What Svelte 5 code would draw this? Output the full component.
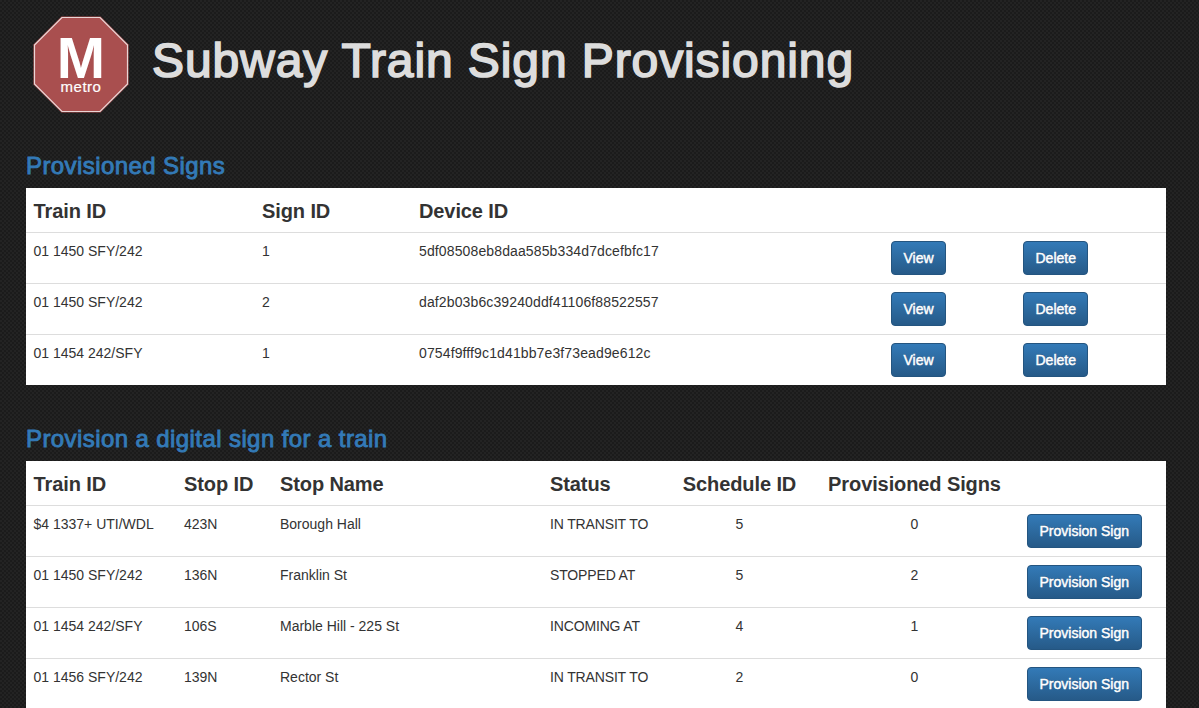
<script>
  const signs = [
    { train: '01 1450 SFY/242', sign: '1', device: '5df08508eb8daa585b334d7dcefbfc17' },
    { train: '01 1450 SFY/242', sign: '2', device: 'daf2b03b6c39240ddf41106f88522557' },
    { train: '01 1454 242/SFY', sign: '1', device: '0754f9fff9c1d41bb7e3f73ead9e612c' }
  ];
  const trains = [
    { train: '$4 1337+ UTI/WDL', stop: '423N', name: 'Borough Hall', status: 'IN TRANSIT TO', schedule: 5, count: 0 },
    { train: '01 1450 SFY/242', stop: '136N', name: 'Franklin St', status: 'STOPPED AT', schedule: 5, count: 2 },
    { train: '01 1454 242/SFY', stop: '106S', name: 'Marble Hill - 225 St', status: 'INCOMING AT', schedule: 4, count: 1 },
    { train: '01 1456 SFY/242', stop: '139N', name: 'Rector St', status: 'IN TRANSIT TO', schedule: 2, count: 0 }
  ];
</script>

<div class="page">
  <header class="top">
    <svg class="logo" viewBox="0 0 96 97" width="96" height="97" aria-label="metro logo">
      <polygon points="28.5,0.5 67.5,0.5 95.5,28.5 95.5,68.5 67.5,96.5 28.5,96.5 0.5,68.5 0.5,28.5" fill="#a94f4f" />
      <polygon points="29,1.5 67,1.5 94.5,29 94.5,68 67,95.5 29,95.5 1.5,68 1.5,29" fill="none" stroke="#e9d5d5" stroke-width="1.2" />
      <text x="48" y="62" text-anchor="middle" class="logo-m">M</text>
      <text x="48" y="76" text-anchor="middle" class="logo-metro">metro</text>
    </svg>
    <h1>Subway Train Sign Provisioning</h1>
  </header>

  <section class="first">
    <h3>Provisioned Signs</h3>
    <table>
      <colgroup>
        <col class="a1" /><col class="a2" /><col class="a3" /><col class="a4" /><col class="a5" />
      </colgroup>
      <thead>
        <tr><th>Train ID</th><th>Sign ID</th><th>Device ID</th><th></th><th></th></tr>
      </thead>
      <tbody>
        {#each signs as s}
          <tr>
            <td>{s.train}</td>
            <td>{s.sign}</td>
            <td class="hex">{s.device}</td>
            <td><button>View</button></td>
            <td><button>Delete</button></td>
          </tr>
        {/each}
      </tbody>
    </table>
  </section>

  <section class="second">
    <h3>Provision a digital sign for a train</h3>
    <table>
      <colgroup>
        <col class="b1" /><col class="b2" /><col class="b3" /><col class="b4" /><col class="b5" /><col class="b6" /><col class="b7" />
      </colgroup>
      <thead>
        <tr>
          <th>Train ID</th><th>Stop ID</th><th>Stop Name</th><th>Status</th>
          <th class="center">Schedule ID</th><th class="center">Provisioned Signs</th><th></th>
        </tr>
      </thead>
      <tbody>
        {#each trains as t}
          <tr>
            <td>{t.train}</td>
            <td>{t.stop}</td>
            <td>{t.name}</td>
            <td class="status">{t.status}</td>
            <td class="center">{t.schedule}</td>
            <td class="center">{t.count}</td>
            <td><button>Provision Sign</button></td>
          </tr>
        {/each}
      </tbody>
    </table>
  </section>
</div>

<style>
  :global(body) {
    margin: 0;
    background-color: #1b1b1b;
    background-image:
      radial-gradient(circle at 1px 1px, rgba(255, 255, 255, 0.035) 0 1px, transparent 1.2px),
      radial-gradient(circle at 3px 3px, rgba(255, 255, 255, 0.035) 0 1px, transparent 1.2px);
    background-size: 4px 4px;
    font-family: "Liberation Sans", Arial, sans-serif;
    color: #333;
    overflow: hidden;
  }
  .page {
    height: 708px;
    overflow: hidden;
    padding: 0 33px 0 26px;
  }
  .top {
    display: flex;
    align-items: center;
    gap: 24px;
    padding: 16px 0 0 7px;
    height: 96px;
  }
  .logo { flex: none; display: block; }
  .logo-m { font: 700 58px "Liberation Sans", Arial, sans-serif; fill: #fff; }
  .logo-metro { font: 400 15px "Liberation Sans", Arial, sans-serif; letter-spacing: 0.5px; fill: #fff; stroke: #fff; stroke-width: 0.2px; }
  h1 {
    margin: 0 0 8px -1px;
    font-size: 48px;
    line-height: 53px;
    font-weight: 400;
    letter-spacing: 0.9px;
    -webkit-text-stroke: 1.7px #ddd;
    color: #ddd;
    white-space: nowrap;
  }
  h3 {
    margin: 0 0 9px;
    font-size: 24px;
    line-height: 26px;
    font-weight: 400;
    letter-spacing: 0.41px;
    -webkit-text-stroke: 0.9px #337ab7;
    color: #337ab7;
  }
  .first { margin-top: 41px; }
  .second { margin-top: 41px; }
  table {
    width: 1140px;
    table-layout: fixed;
    border-collapse: collapse;
    background: #fff;
    font-size: 14px;
    line-height: 20px;
  }
  .a1 { width: 228px; } .a2 { width: 157px; } .a3 { width: 472px; } .a4 { width: 132px; } .a5 { width: 151px; }
  .b1 { width: 150px; } .b2 { width: 96px; } .b3 { width: 270px; } .b4 { width: 127px; }
  .b5 { width: 141px; } .b6 { width: 209px; } .b7 { width: 147px; }
  th {
    text-align: left;
    padding: 11px 8px 8px;
    font-size: 20px;
    line-height: 25px;
    font-weight: 700;
    letter-spacing: -0.1px;
    color: #333;
    white-space: nowrap;
    border-bottom: 1px solid #ddd;
  }
  td {
    padding: 8px;
    vertical-align: top;
    border-top: 1px solid #ddd;
    white-space: nowrap;
  }
  th:first-child, td:first-child { padding-left: 7.5px; }
  thead + tbody tr:first-child td { border-top: 0; }
  .center { text-align: center; }
  .hex { letter-spacing: 0.125px; }
  .status { letter-spacing: -0.15px; }
  button {
    display: inline-block;
    height: 34px;
    padding: 6px 11.5px;
    font: 400 14px/20px "Liberation Sans", Arial, sans-serif;
    color: #fff;
    -webkit-text-stroke: 0.45px #fff;
    text-shadow: 0 -1px 0 rgba(0, 0, 0, 0.2);
    background-image: linear-gradient(to bottom, #337ab7 0%, #265a88 100%);
    border: 1px solid #245580;
    border-radius: 4px;
    box-sizing: border-box;
  }
</style>
